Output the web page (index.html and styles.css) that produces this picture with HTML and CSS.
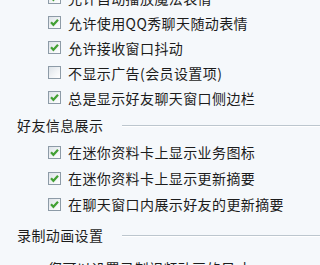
FILE: index.html
```html
<!DOCTYPE html>
<html lang="zh-CN">
<head>
  <meta charset="UTF-8" />
  <title>聊天设置</title>
  <link rel="stylesheet" href="styles.css">
</head>
<body>
  <div class="panel">
    <section class="group">
      <ul class="options">
        <li><span class="box checked"></span>允许自动播放魔法表情</li>
        <li><span class="box checked"></span>允许使用QQ秀聊天随动表情</li>
        <li><span class="box checked"></span>允许接收窗口抖动</li>
        <li><span class="box"></span>不显示广告(会员设置项)</li>
        <li><span class="box checked"></span>总是显示好友聊天窗口侧边栏</li>
      </ul>
    </section>

    <section class="group">
      <h2 class="group-title">好友信息展示</h2>
      <ul class="options loose">
        <li><span class="box checked"></span>在迷你资料卡上显示业务图标</li>
        <li><span class="box checked"></span>在迷你资料卡上显示更新摘要</li>
        <li><span class="box checked"></span>在聊天窗口内展示好友的更新摘要</li>
      </ul>
    </section>

    <section class="group">
      <h2 class="group-title">录制动画设置</h2>
      <p class="note">您可以设置录制视频动画的尺寸</p>
    </section>
  </div>
</body>
</html>
```

FILE: styles.css
```css
/* Reset */
* {
  box-sizing: border-box;
  margin: 0;
  padding: 0;
}

body {
  font-family: "Noto Sans CJK SC", "Liberation Sans", sans-serif;
  font-size: 14px;
  letter-spacing: 0.4px;
  background: #f5f8fb;
  color: #1c1c1c;
  overflow: hidden;
}

.panel {
  margin-top: -15px;
}

.options {
  list-style: none;
  padding-left: 48px;
}

.options li {
  height: 25px;
  display: flex;
  align-items: center;
  gap: 7px;
  white-space: nowrap;
}

.options.loose li {
  height: 26px;
}

/* Section heading with the etched rule */
.group-title {
  height: 29px;
  display: flex;
  align-items: center;
  padding-left: 17px;
  font-size: 14px;
  font-weight: normal;
}

.group-title::after {
  content: "";
  flex: 1;
  margin-left: 19px;
  margin-top: 2px;
  height: 1px;
  background: #bcc6ce;
  box-shadow: 0 1px 0 #ffffff;
}

.group:last-child .group-title {
  margin-top: 3px;
}

/* Checkbox */
.box {
  flex: none;
  width: 13px;
  height: 13px;
  border: 1px solid #8d9ba7;
  background: linear-gradient(135deg, #dde3e8 0%, #f3f5f7 60%, #ffffff 100%);
}

.box.checked {
  background:
    url("data:image/svg+xml,%3Csvg xmlns='http://www.w3.org/2000/svg' width='11' height='11'%3E%3Cpath d='M2 5.2 L4.4 7.8 L9 2.8' fill='none' stroke='%2342a033' stroke-width='2.2'/%3E%3C/svg%3E") center / 11px 11px no-repeat,
    linear-gradient(135deg, #dde3e8 0%, #f3f5f7 60%, #ffffff 100%);
}

.note {
  padding-left: 48px;
  line-height: 26px;
  margin-top: 6px;
}
```
